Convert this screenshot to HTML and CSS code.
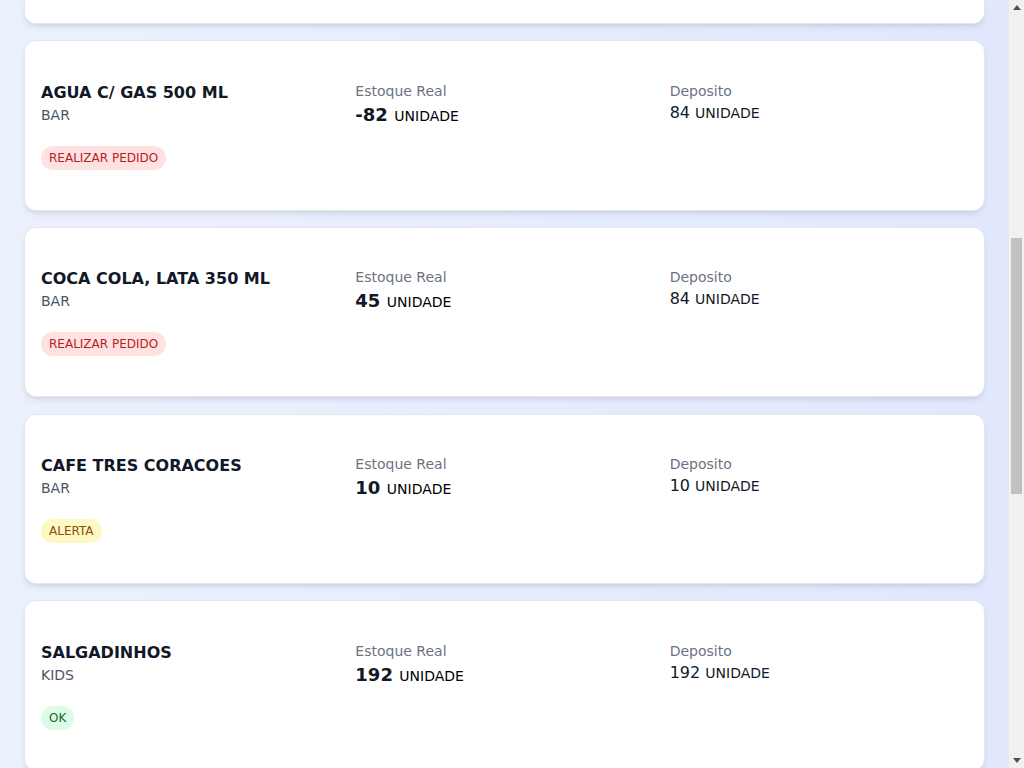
FILE: index.html
```html
<!DOCTYPE html>
<html lang="pt-BR">
<head>
<meta charset="utf-8">
<title>Estoque</title>
<link rel="stylesheet" href="styles.css">
</head>
<body>
<div class="frame">
  <main class="page">
    <section class="list">
      <div class="card-stub" aria-hidden="true"></div>
      <article class="card">
        <div class="col"><div class="name">AGUA C/ GAS 500 ML</div><div class="cat">BAR</div><span class="badge danger">REALIZAR PEDIDO</span></div>
        <div class="col"><div class="label">Estoque Real</div><div class="real"><b>-82</b> UNIDADE</div></div>
        <div class="col"><div class="label">Deposito</div><div class="dep">84 <small>UNIDADE</small></div></div>
      </article>
      <article class="card">
        <div class="col"><div class="name">COCA COLA, LATA 350 ML</div><div class="cat">BAR</div><span class="badge danger">REALIZAR PEDIDO</span></div>
        <div class="col"><div class="label">Estoque Real</div><div class="real"><b>45</b> UNIDADE</div></div>
        <div class="col"><div class="label">Deposito</div><div class="dep">84 <small>UNIDADE</small></div></div>
      </article>
      <article class="card">
        <div class="col"><div class="name">CAFE TRES CORACOES</div><div class="cat">BAR</div><span class="badge warn">ALERTA</span></div>
        <div class="col"><div class="label">Estoque Real</div><div class="real"><b>10</b> UNIDADE</div></div>
        <div class="col"><div class="label">Deposito</div><div class="dep">10 <small>UNIDADE</small></div></div>
      </article>
      <article class="card">
        <div class="col"><div class="name">SALGADINHOS</div><div class="cat">KIDS</div><span class="badge ok">OK</span></div>
        <div class="col"><div class="label">Estoque Real</div><div class="real"><b>192</b> UNIDADE</div></div>
        <div class="col"><div class="label">Deposito</div><div class="dep">192 <small>UNIDADE</small></div></div>
      </article>
    </section>
  </main>
  <div class="scrollbar" aria-hidden="true">
    <span class="arrow up"></span>
    <div class="track"><div class="thumb"></div></div>
    <span class="arrow down"></span>
  </div>
</div>
</body>
</html>
```

FILE: styles.css
```css
* { box-sizing: border-box; }
html, body { margin: 0; padding: 0; height: 100%; overflow: hidden; }
body {
  font-family: "DejaVu Sans", sans-serif;
  color: #111827;
}
.frame { display: flex; height: 768px; }
.page {
  flex: 1;
  min-width: 0;
  padding: 0 24px;
  overflow: hidden;
  background: linear-gradient(90deg, #ebf1fc 0%, #e1e8fe 100%);
}
.list { display: flex; flex-direction: column; gap: 16.33px; }
.card-stub {
  height: 24.17px;
  background: #fff;
  border: 1px solid #e5e7eb;
  border-top: none;
  border-radius: 0 0 12px 12px;
  box-shadow: 0 4px 6px -1px rgba(0,0,0,0.08), 0 2px 4px -2px rgba(0,0,0,0.08);
}
.card {
  flex: none;
  background: #fff;
  border: 1px solid #e5e7eb;
  border-radius: 12px;
  box-shadow: 0 4px 6px -1px rgba(0,0,0,0.08), 0 2px 4px -2px rgba(0,0,0,0.08);
  padding: 39.33px 16px 40px;
  display: grid;
  grid-template-columns: 1fr 1fr 1fr;
  column-gap: 16px;
  align-items: start;
}
.col { display: flex; flex-direction: column; align-items: flex-start; }
.name { font-size: 16px; line-height: 24px; font-weight: 700; color: #111827; }
.cat { font-size: 14px; line-height: 20px; color: #4b5563; }
.badge {
  margin-top: 21px;
  display: inline-block;
  padding: 4px 8px;
  font-size: 12px;
  line-height: 16px;
  border-radius: 9999px;
}
.badge.danger { background: #fee2e2; color: #b91c1c; }
.badge.warn { background: #fef9c3; color: #854d0e; }
.badge.ok { background: #dcfce7; color: #166534; }
.label { font-size: 14px; line-height: 20px; color: #6b7280; }
.real { font-size: 14px; line-height: 28px; color: #000; }
.real b { font-size: 18px; font-weight: 700; color: #111827; margin-right: 2px; }
.dep { font-size: 16px; line-height: 24px; color: #111827; }
.dep small { font-size: 14px; }

.scrollbar {
  width: 15px;
  flex: none;
  background: #f1f1f1;
  display: flex;
  flex-direction: column;
  align-items: center;
}
.arrow { width: 0; height: 0; flex: none; border-left: 4px solid transparent; border-right: 4px solid transparent; }
.arrow.up { margin-top: 5px; border-bottom: 5px solid #505050; }
.arrow.down { margin-bottom: 5px; border-top: 5px solid #505050; }
.track { flex: 1; width: 100%; padding: 0 2px; }
.thumb { margin-top: 228px; height: 256px; background: #c1c1c1; }
```
